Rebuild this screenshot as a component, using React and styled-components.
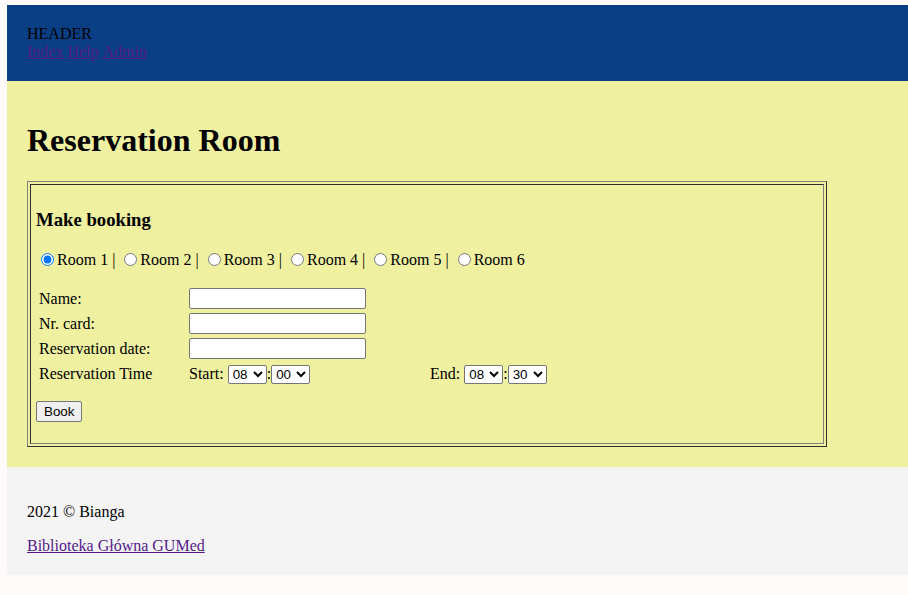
import React from "react";
import styled, { createGlobalStyle } from "styled-components";

const GlobalStyle = createGlobalStyle`
  html, body {
    background: #fffafa;
  }
  body {
    margin: 5px 0 0 7px;
    font-family: "Liberation Serif", "Times New Roman", serif;
    font-size: 16px;
    color: #000;
  }
  a {
    color: #551a8b;
  }
`;

const Header = styled.header`
  background: #0a3f85;
  padding: 20px;
`;

const NavLinks = styled.nav`
  display: flex;
  gap: 4px;
`;

const Main = styled.main`
  background: #eff0a0;
  padding: 20px;
`;

const Title = styled.h1`
  font-size: 32px;
  margin: 21.44px 0;
`;

const BookingTable = styled.div`
  width: 800px;
  box-sizing: border-box;
  padding: 2px;
  border: 1px solid;
  border-color: #808080 #2e2e2e #2e2e2e #808080;
`;

const BookingCell = styled.div`
  padding: 5px;
  border: 1px solid;
  border-color: #2e2e2e #808080 #808080 #2e2e2e;
`;

const SubTitle = styled.h3`
  font-size: 18.72px;
  margin: 18.72px 0;
`;

const RadioRow = styled.div`
  padding-top: 1px;
  margin-bottom: 18.4px;
`;

const RoomLabel = styled.label`
  input {
    margin: 3px 3px 0 5px;
    vertical-align: -1px;
  }
`;

const Divider = styled.span`
  margin: 0 4px;
`;

const FormGrid = styled.div`
  display: grid;
  grid-template-columns: 150px 241px auto;
  grid-auto-rows: 21px;
  row-gap: 4px;
  align-items: center;
  margin: 3px 0 0 3px;
`;

const FieldLabel = styled.span`
  white-space: nowrap;
  padding-top: 1px;
`;

const TextInput = styled.input`
  width: 177px;
  height: 21px;
  box-sizing: border-box;
  border: 1px solid #767676;
  border-radius: 2px;
  background: #fff;
  padding: 1px 2px;
  font: 13.33px "Liberation Sans", Arial, sans-serif;
`;

const TimeGroup = styled.div`
  display: flex;
  align-items: center;
  white-space: pre;
  align-self: end;
  height: 19px;
`;

const TimeSelect = styled.select`
  width: 39px;
  height: 19px;
  font: 13.33px "Liberation Sans", Arial, sans-serif;
  border: 1px solid #767676;
  border-radius: 2px;
  background: #fff;
  color: #000;
  padding: 0;
`;

const ButtonRow = styled.p`
  margin: 17px 0 16px;
`;

const BookButton = styled.button`
  font: 13.33px "Liberation Sans", Arial, sans-serif;
  height: 21px;
  padding: 1px 7px;
  border: 1px solid #767676;
  border-radius: 2px;
  background: #efefef;
  color: #000;
`;

const Footer = styled.footer`
  background: #f4f4f4;
  padding: 20px;
`;

const Copy = styled.p`
  margin: 16px 0;
`;

const hours = ["08", "09", "10", "11", "12", "13", "14", "15", "16", "17", "18", "19"];
const minutes = ["00", "30"];

function Time({ label, hour, minute }) {
  return (
    <TimeGroup>
      {label + " "}
      <TimeSelect defaultValue={hour}>
        {hours.map((h) => (
          <option key={h}>{h}</option>
        ))}
      </TimeSelect>
      :
      <TimeSelect defaultValue={minute}>
        {minutes.map((m) => (
          <option key={m}>{m}</option>
        ))}
      </TimeSelect>
    </TimeGroup>
  );
}

export default function App() {
  const rooms = [1, 2, 3, 4, 5, 6];
  return (
    <>
      <GlobalStyle />
      <Header>
        <div>HEADER</div>
        <NavLinks>
          <a href="#index">Index</a>
          <a href="#help">Help</a>
          <a href="#admin">Admin</a>
        </NavLinks>
      </Header>
      <Main>
        <Title>Reservation Room</Title>
        <BookingTable>
          <BookingCell>
            <SubTitle>Make booking</SubTitle>
            <RadioRow>
              {rooms.map((r, i) => (
                <React.Fragment key={r}>
                  <RoomLabel>
                    <input type="radio" name="room" defaultChecked={r === 1} />
                    Room {r}
                  </RoomLabel>
                  {i < rooms.length - 1 && <Divider>|</Divider>}
                </React.Fragment>
              ))}
            </RadioRow>
            <FormGrid>
              <FieldLabel>Name:</FieldLabel>
              <TextInput type="text" />
              <span />
              <FieldLabel>Nr. card:</FieldLabel>
              <TextInput type="text" />
              <span />
              <FieldLabel>Reservation date:</FieldLabel>
              <TextInput type="text" />
              <span />
              <FieldLabel>Reservation Time</FieldLabel>
              <Time label="Start:" hour="08" minute="00" />
              <Time label="End:" hour="08" minute="30" />
            </FormGrid>
            <ButtonRow>
              <BookButton>Book</BookButton>
            </ButtonRow>
          </BookingCell>
        </BookingTable>
      </Main>
      <Footer>
        <Copy>2021 © Bianga</Copy>
        <a href="#gumed">Biblioteka Główna GUMed</a>
      </Footer>
    </>
  );
}
